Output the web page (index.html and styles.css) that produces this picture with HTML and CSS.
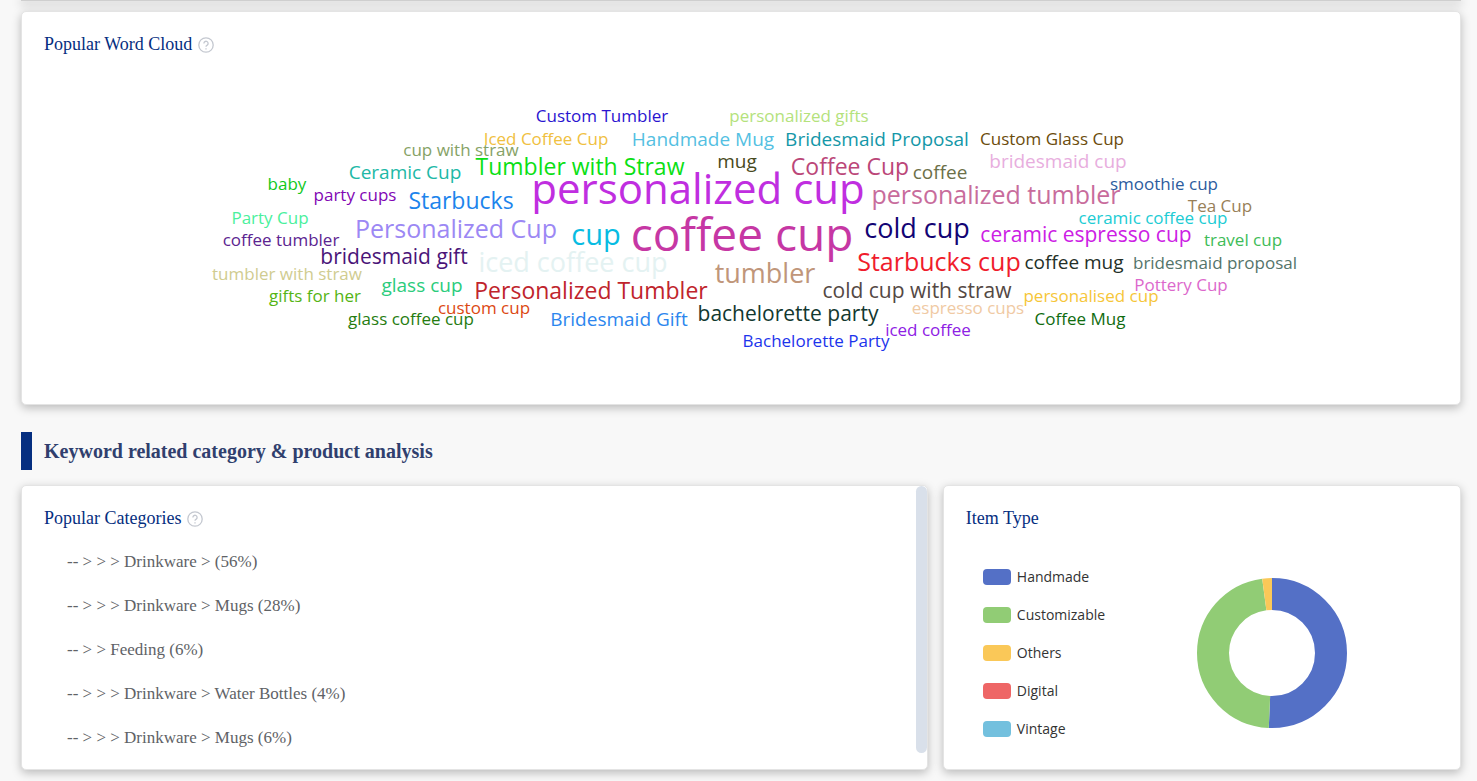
FILE: index.html
```html
<!DOCTYPE html>
<html lang="en">
<head>
  <meta charset="UTF-8">
  <title>Keyword analysis</title>
  <meta name="viewport" content="width=device-width, initial-scale=1.0">
  <link rel="stylesheet" href="styles.css">
</head>
<body>
  <div class="prev-edge"></div>
  <main class="page">
    <!-- word cloud -->
    <section class="card cloud-card">
      <h3 class="card-title">Popular Word Cloud
        <svg class="help" viewBox="0 0 16 16" aria-hidden="true"><circle cx="8" cy="8" r="7.2"/><path d="M5.9 6.4a2.1 2.1 0 1 1 3.3 1.7c-.8.5-1.2.8-1.2 1.7"/><path d="M8 11.2v1.2"/></svg>
      </h3>
      <svg class="cloud" viewBox="22 70 1438 334" role="img" aria-label="Word cloud">
        <text class="s17" x="602" y="122" fill="#2a14d0">Custom Tumbler</text>
        <text class="s17" x="799" y="122" fill="#b4e27c">personalized gifts</text>
        <text class="s17" x="546" y="145" fill="#f0c040">Iced Coffee Cup</text>
        <text class="s19" x="703" y="146" fill="#54bfe2">Handmade Mug</text>
        <text class="s19" x="877" y="146" fill="#1497a8">Bridesmaid Proposal</text>
        <text class="s17" x="1052" y="145" fill="#6b4c0c">Custom Glass Cup</text>
        <text class="s17" x="461" y="156" fill="#86a266">cup with straw</text>
        <text class="s23" x="580" y="175" fill="#0ae014">Tumbler with Straw</text>
        <text class="s19" x="737" y="168" fill="#484a20">mug</text>
        <text class="s23" x="850" y="175" fill="#bb4678">Coffee Cup</text>
        <text class="s19" x="940" y="179" fill="#6c7048">coffee</text>
        <text class="s19" x="1058" y="168" fill="#e8aede">bridesmaid cup</text>
        <text class="s19" x="405" y="179" fill="#20b8a6">Ceramic Cup</text>
        <text class="s17" x="287" y="190" fill="#12c81c">baby</text>
        <text class="s17" x="355" y="201" fill="#8206b4">party cups</text>
        <text class="s23" x="461" y="209" fill="#1c84ec">Starbucks</text>
        <text class="s42" x="698" y="204" fill="#c02ee0">personalized cup</text>
        <text class="s25" x="996" y="204" fill="#c86c9c">personalized tumbler</text>
        <text class="s17" x="1164" y="190" fill="#2c5c9e">smoothie cup</text>
        <text class="s17" x="1220" y="212" fill="#988058">Tea Cup</text>
        <text class="s17" x="270" y="224" fill="#4af09c">Party Cup</text>
        <text class="s17" x="1153" y="224" fill="#20ccd4">ceramic coffee cup</text>
        <text class="s17" x="281" y="246" fill="#5c2490">coffee tumbler</text>
        <text class="s25" x="456" y="238" fill="#9c88f4">Personalized Cup</text>
        <text class="s29" x="596" y="245" fill="#08bce2">cup</text>
        <text class="s46" x="742" y="251" fill="#c637a4">coffee cup</text>
        <text class="s27" x="917" y="238" fill="#120474">cold cup</text>
        <text class="s21" x="1086" y="242" fill="#cc20e4">ceramic espresso cup</text>
        <text class="s17" x="1243" y="246" fill="#40bc58">travel cup</text>
        <text class="s21" x="394" y="264" fill="#4a1478">bridesmaid gift</text>
        <text class="s27" x="573" y="272" fill="#e4f2f2">iced coffee cup</text>
        <text class="s25" x="939" y="271" fill="#f01c2c">Starbucks cup</text>
        <text class="s19" x="1074" y="269" fill="#243028">coffee mug</text>
        <text class="s17" x="1215" y="269" fill="#54746a">bridesmaid proposal</text>
        <text class="s17" x="287" y="280" fill="#d0cc90">tumbler with straw</text>
        <text class="s27" x="765" y="283" fill="#c0967a">tumbler</text>
        <text class="s17" x="1181" y="291" fill="#dc68cc">Pottery Cup</text>
        <text class="s17" x="315" y="302" fill="#54b414">gifts for her</text>
        <text class="s19" x="422" y="292" fill="#2acc7c">glass cup</text>
        <text class="s23" x="591" y="299" fill="#c0242c">Personalized Tumbler</text>
        <text class="s21" x="917" y="298" fill="#544844">cold cup with straw</text>
        <text class="s17" x="1091" y="302" fill="#f6c638">personalised cup</text>
        <text class="s17" x="484" y="314" fill="#dc4812">custom cup</text>
        <text class="s17" x="968" y="314" fill="#f0caa4">espresso cups</text>
        <text class="s17" x="411" y="325" fill="#267c10">glass coffee cup</text>
        <text class="s19" x="619" y="326" fill="#2c86ee">Bridesmaid Gift</text>
        <text class="s21" x="788" y="321" fill="#123830">bachelorette party</text>
        <text class="s17" x="1080" y="325" fill="#106c10">Coffee Mug</text>
        <text class="s17" x="928" y="336" fill="#8e20e4">iced coffee</text>
        <text class="s17" x="816" y="347" fill="#1c34ec">Bachelorette Party</text>
      </svg>
    </section>

    <h2 class="section-title">Keyword related category &amp; product analysis</h2>

    <div class="row">
      <!-- categories -->
      <section class="card">
        <h3 class="card-title">Popular Categories
          <svg class="help" viewBox="0 0 16 16" aria-hidden="true"><circle cx="8" cy="8" r="7.2"/><path d="M5.9 6.4a2.1 2.1 0 1 1 3.3 1.7c-.8.5-1.2.8-1.2 1.7"/><path d="M8 11.2v1.2"/></svg>
        </h3>
        <ul class="categories">
          <li>-- &gt; &gt; &gt; Drinkware &gt; (56%)</li>
          <li>-- &gt; &gt; &gt; Drinkware &gt; Mugs (28%)</li>
          <li>-- &gt; &gt; Feeding (6%)</li>
          <li>-- &gt; &gt; &gt; Drinkware &gt; Water Bottles (4%)</li>
          <li>-- &gt; &gt; &gt; Drinkware &gt; Mugs (6%)</li>
        </ul>
        <div class="scroll-thumb"></div>
      </section>

      <!-- item type -->
      <section class="card">
        <h3 class="card-title">Item Type</h3>
        <div class="chart">
          <ul class="legend">
            <li><span class="swatch handmade"></span>Handmade</li>
            <li><span class="swatch customizable"></span>Customizable</li>
            <li><span class="swatch others"></span>Others</li>
            <li><span class="swatch digital"></span>Digital</li>
            <li><span class="swatch vintage"></span>Vintage</li>
          </ul>
          <svg class="donut" viewBox="0 0 150 150" role="img" aria-label="Item type shares">
            <g transform="rotate(-90 75 75)">
              <circle cx="75" cy="75" r="59" pathLength="1000" stroke="#5470c6" stroke-dasharray="507 493"/>
              <circle cx="75" cy="75" r="59" pathLength="1000" stroke="#91cc75" stroke-dasharray="472 528" stroke-dashoffset="-507"/>
              <circle cx="75" cy="75" r="59" pathLength="1000" stroke="#fac858" stroke-dasharray="21 979" stroke-dashoffset="-979"/>
            </g>
          </svg>
        </div>
      </section>
    </div>
  </main>
</body>
</html>
```
FILE: styles.css
```css
* {
  box-sizing: border-box;
}

body {
  margin: 0;
  background: #f8f8f8;
  font-family: "Liberation Serif", "Times New Roman", serif;
  color: #606266;
}

h2, h3, ul {
  margin: 0;
  padding: 0;
  font-weight: normal;
}

ul {
  list-style: none;
}

/* bottom edge of the card above */
.prev-edge {
  height: 1px;
  margin: 0 16px 0 21px;
  background: #cfcfcf;
  box-shadow: 0 2px 10px 1px rgba(0, 0, 0, 0.3);
}

.page {
  padding: 10px 16px 11px 21px;
}

.card {
  position: relative;
  background: #fff;
  border: 1px solid #e4e4e4;
  border-radius: 5px;
  box-shadow: 0 3px 10px rgba(0, 0, 0, 0.25);
}

.card-title {
  display: flex;
  align-items: center;
  gap: 6px;
  padding: 21px 22px 0;
  font-size: 18px;
  line-height: 22px;
  color: #052e80;
}

.help {
  width: 16px;
  height: 16px;
  margin-top: 2px;
  fill: none;
  stroke: #c4c8d0;
  stroke-width: 1.3;
}

/* word cloud */
.cloud-card {
  min-height: 394px;
}

.cloud {
  display: block;
  width: 100%;
  margin-top: 15px;
  font-family: "Open Sans", "Noto Sans", sans-serif;
  text-anchor: middle;
}

.s17 { font-size: 17px; }
.s19 { font-size: 19px; }
.s21 { font-size: 21px; }
.s23 { font-size: 23px; }
.s25 { font-size: 25px; }
.s27 { font-size: 27px; }
.s29 { font-size: 29px; }
.s42 { font-size: 42px; }
.s46 { font-size: 46px; }

.section-title {
  margin: 27px 0 15px;
  padding-left: 12px;
  border-left: 11px solid #052e80;
  font-size: 20px;
  font-weight: bold;
  line-height: 38px;
  color: #303f6e;
}

.row {
  display: grid;
  grid-template-columns: 7fr 4fr;
  gap: 15px;
}

.categories {
  padding: 11px 45px 9px;
  font-size: 17px;
  line-height: 44px;
}

.scroll-thumb {
  position: absolute;
  top: 0;
  right: 0;
  width: 11px;
  height: 267px;
  border-radius: 6px;
  background: #d9e0ea;
}

/* item type chart */
.chart {
  display: flex;
  align-items: center;
  gap: 92px;
  padding: 29px 39px 0;
}

.legend {
  font-family: "Open Sans", "Noto Sans", sans-serif;
  font-size: 14px;
  line-height: 38px;
  color: #333;
}

.legend li {
  display: flex;
  align-items: center;
  gap: 6px;
}

.swatch {
  width: 28px;
  height: 16px;
  border-radius: 4px;
}

.handmade { background: #5470c6; }
.customizable { background: #91cc75; }
.others { background: #fac858; }
.digital { background: #ee6666; }
.vintage { background: #73c0de; }

.donut {
  width: 150px;
  height: 150px;
  fill: none;
  stroke-width: 32;
}
```
